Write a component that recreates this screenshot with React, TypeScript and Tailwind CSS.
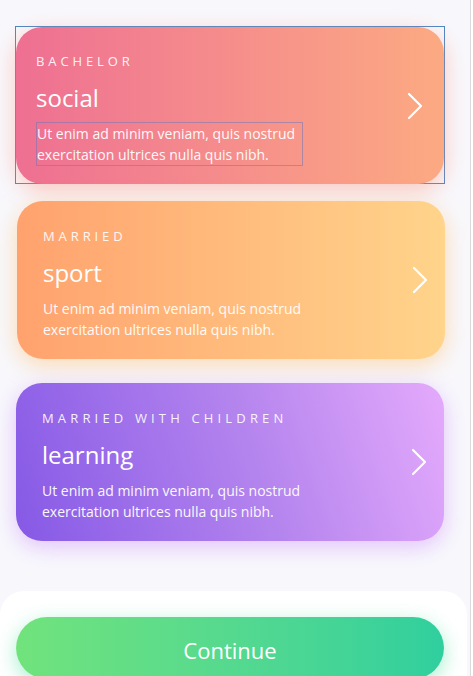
import React from "react";

const Chevron = () => (
  <svg width="18" height="28" viewBox="0 0 18 28" fill="none" className="shrink-0">
    <polyline points="3,2 15,14 3,26" stroke="white" strokeWidth="2.2" strokeLinecap="round" strokeLinejoin="round" />
  </svg>
);

export default function App() {
  const font = { fontFamily: '"Open Sans", "Noto Sans", sans-serif' };
  return (
    <div className="w-[473px] h-[676px] flex bg-white overflow-hidden" style={font}>
      <div className="w-[471px] h-full bg-[#f8f8fc] border-r border-[#dadada] flex flex-col relative">
        {/* Card 1 */}
        <div className="mt-[26px] ml-[15px] w-[430px] h-[158px] border border-[#4a87c4]">
          <div className="h-[157px] rounded-[26px] bg-gradient-to-r from-[#ee6f92] to-[#fcaa82] shadow-[0_6px_22px_rgba(255,140,120,0.45)] pl-[20px] pr-[20px] pt-[28px] flex items-start justify-between text-white">
            <div className="flex flex-col">
              <div className="text-[13px] tracking-[0.3em] leading-none opacity-90">BACHELOR</div>
              <div className="text-[24px] leading-none mt-[18px]">social</div>
              <div className="mt-[12px] w-[267px] border border-[rgba(110,120,190,0.55)] text-[14px] leading-[21px] opacity-95">
                Ut enim ad minim veniam, quis nostrud exercitation ultrices nulla quis nibh.
              </div>
            </div>
            <div className="mt-[37px]"><Chevron /></div>
          </div>
        </div>
        {/* Card 2 */}
        <div className="mt-[17px] ml-[17px] w-[428px] h-[158px] shrink-0 rounded-[26px] bg-gradient-to-r from-[#ffa26e] to-[#ffd48b] shadow-[0_6px_22px_rgba(255,190,110,0.5)] pl-[26px] pr-[16px] pt-[29px] flex items-start justify-between text-white">
          <div className="flex flex-col">
            <div className="text-[13px] tracking-[0.3em] leading-none opacity-90">MARRIED</div>
            <div className="text-[24px] leading-none mt-[18px]">sport</div>
            <div className="mt-[13px] w-[280px] text-[14px] leading-[21px] opacity-95">
              Ut enim ad minim veniam, quis nostrud exercitation ultrices nulla quis nibh.
            </div>
          </div>
          <div className="mt-[36px]"><Chevron /></div>
        </div>
        {/* Card 3 */}
        <div className="mt-[24px] ml-[16px] w-[428px] h-[158px] shrink-0 rounded-[26px] bg-[linear-gradient(72deg,#8659e6_0%,#b484ee_55%,#e4aafc_100%)] shadow-[0_6px_22px_rgba(200,130,250,0.45)] pl-[26px] pr-[16px] pt-[29px] flex items-start justify-between text-white">
          <div className="flex flex-col">
            <div className="text-[13px] tracking-[0.32em] leading-none opacity-90">MARRIED WITH CHILDREN</div>
            <div className="text-[24px] leading-none mt-[18px]">learning</div>
            <div className="mt-[13px] w-[280px] text-[14px] leading-[21px] opacity-95">
              Ut enim ad minim veniam, quis nostrud exercitation ultrices nulla quis nibh.
            </div>
          </div>
          <div className="mt-[36px]"><Chevron /></div>
        </div>
        {/* Bottom panel */}
        <div className="mt-[50px] w-[467px] flex-1 bg-white rounded-t-[24px] pt-[26px] px-[16px]">
          <div className="h-[62px] w-[428px] rounded-full bg-gradient-to-r from-[#71e37c] to-[#2fcf9e] shadow-[0_6px_20px_rgba(60,220,150,0.45)] flex items-start justify-center pt-[22px]">
            <span className="text-white text-[22px] leading-none">Continue</span>
          </div>
        </div>
      </div>
    </div>
  );
}
